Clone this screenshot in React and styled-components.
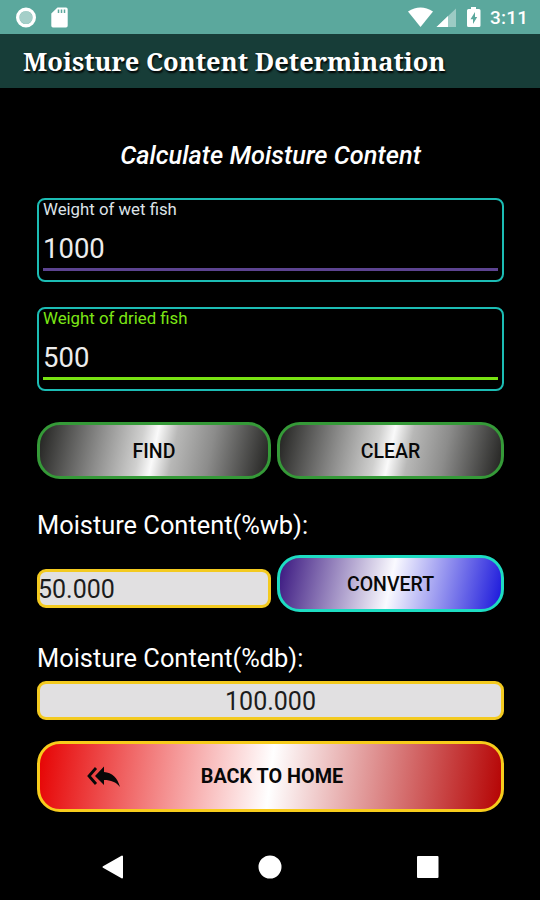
import React, { useState } from 'react';
import styled, { createGlobalStyle } from 'styled-components';

const GlobalStyle = createGlobalStyle`
  * {
    box-sizing: border-box;
  }

  body {
    margin: 0;
    background: #000;
  }
`;

const Screen = styled.div`
  display: flex;
  flex-direction: column;
  width: 540px;
  height: 900px;
  background: #000;
  color: #fff;
  font-family: Roboto, sans-serif;
  overflow: hidden;
`;

const StatusBar = styled.div`
  display: flex;
  justify-content: space-between;
  height: 34px;
  background: #5ba89d;
`;

const Clock = styled.span`
  width: 50px;
  font-size: 19px;
  font-weight: 500;
  line-height: 36px;
  letter-spacing: 0.2px;
`;

const StatusRight = styled.div`
  display: flex;
`;

const AppBar = styled.header`
  display: flex;
  align-items: center;
  height: 54px;
  padding: 0 0 1px 23px;
  background: #173d38;
`;

const AppTitle = styled.h1`
  margin: 0;
  font-family: 'Noto Serif', 'DejaVu Serif Condensed', 'DejaVu Serif', serif;
  font-size: 25.5px;
  font-weight: bold;
  white-space: nowrap;
  text-shadow: 1px 2px 2px #000;
`;

const Content = styled.main`
  flex: 1;
  display: flex;
  flex-direction: column;
  padding: 0 36px 0 37px;
`;

const Heading = styled.h2`
  margin: 51px 0 27px;
  font-size: 25.4px;
  font-weight: 500;
  font-style: italic;
  line-height: 32px;
  text-align: center;
`;

const FieldBox = styled.label`
  display: flex;
  flex-direction: column;
  height: 84px;
  margin-bottom: 25px;
  padding: 0 4px;
  border: 2px solid #1cbcb4;
  border-radius: 8px;
`;

const FieldLabel = styled.span`
  height: 18px;
  font-size: 16.8px;
  line-height: 18px;
  color: ${({ color }) => color};
`;

const FieldInput = styled.input`
  width: 100%;
  height: 53px;
  padding: 11px 0 0;
  border: 0;
  border-bottom: 3px solid ${({ $line }) => $line};
  outline: none;
  background: transparent;
  color: #ececec;
  font-family: inherit;
  font-size: 27.5px;
`;

const Row = styled.div`
  display: grid;
  grid-template-columns: 234px 227px;
  column-gap: 6px;
  align-items: end;
  margin-top: ${({ $top }) => $top}px;
`;

const Button = styled.button`
  height: 57px;
  padding: 2px 0 0;
  border: 3px solid ${({ $border }) => $border};
  border-radius: 23px;
  background: linear-gradient(${({ $angle }) => $angle || 102}deg, ${({ $colors }) => $colors});
  background-origin: border-box;
  color: #080808;
  font-family: inherit;
  font-size: 19.5px;
  font-weight: 500;
`;

const HomeButton = styled(Button)`
  display: grid;
  grid-template-columns: 1fr auto 1fr;
  align-items: center;
  height: 71px;
  margin-top: 21px;
  padding: 0 0 0 3px;
  font-size: 19.8px;
  font-weight: 700;

  svg {
    margin-left: 43px;
  }
`;

const ResultLabel = styled.div`
  height: 32px;
  margin-top: 31px;
  font-size: 25.4px;
  line-height: 31px;
`;

const Result = styled.output`
  display: block;
  height: 39px;
  border: 3px solid #f3ca20;
  border-radius: 9px;
  background: #e1e0e1;
  color: #1c1c1c;
  font-size: 25px;
  line-height: 35px;
`;

const WetResult = styled(Result)`
  margin-bottom: 4px;
  text-indent: -2px;
`;

const DryResult = styled(Result)`
  margin-top: 6px;
  text-align: center;
`;

const NavBar = styled.nav`
  height: 66px;
`;

const silver = '#1c1c1a 0%, #8c8c8b 27%, #d0d0cf 44%, #fafafa 50%, #b8b8b7 58%, #8c8c8b 73%, #1c1c1a 100%';
const violet = '#34107c 0%, #fafaff 50%, #1310da 100%';
const red = '#e60000 0%, #fff 50%, #b40000 100%';

const App = () => {
  const [wet, setWet] = useState('1000');
  const [dried, setDried] = useState('500');
  const [wb, setWb] = useState('50.000');
  const [db, setDb] = useState('100.000');

  const find = () => setWb((((wet - dried) / wet) * 100).toFixed(3));

  const convert = () => setDb(((wb / (100 - wb)) * 100).toFixed(3));

  const clear = () => {
    setWet('');
    setDried('');
    setWb('');
    setDb('');
  };

  return (
    <Screen>
      <GlobalStyle />
      <StatusBar>
        <svg width="80" height="34" fill="#fff">
          <circle cx="26" cy="17.5" r="6.5" opacity="0.45" />
          <circle cx="26" cy="17.5" r="8.3" fill="none" stroke="#fff" strokeWidth="3.4" />
          <path d="M57.5 7.5H66a1.7 1.7 0 0 1 1.7 1.7v16.6a1.7 1.7 0 0 1-1.7 1.7H53a1.7 1.7 0 0 1-1.7-1.7V13.5z" />
          <path d="M58.5 9.5v3.5M61.5 9.5v3.5M64.5 9.5v3.5" stroke="#5ba89d" strokeWidth="1.5" />
        </svg>
        <StatusRight>
          <svg width="90" height="34" fill="#fff">
            <path d="M8 11.5Q20.500 3.500 33 11.500L20.500 27z" />
            <path d="M56 8.500V27H36.500z" opacity="0.4" />
            <path d="M48 16V27H36.500z" />
            <path d="M71 7h5v2h3A1.500 1.500 0 0 1 80.500 10.500v15A1.500 1.500 0 0 1 79 27H68.500A1.500 1.500 0 0 1 67 25.500v-15a1.500 1.500 0 0 1 1.500-1.500H71z" />
            <path d="M75 12l-4.500 7.200h2.500v4.800l4.200-7H75z" fill="#5ba89d" />
          </svg>
          <Clock>3:11</Clock>
        </StatusRight>
      </StatusBar>
      <AppBar>
        <AppTitle>Moisture Content Determination</AppTitle>
      </AppBar>
      <Content>
        <Heading>Calculate Moisture Content</Heading>
        <FieldBox>
          <FieldLabel color="#dde3e8">Weight of wet fish</FieldLabel>
          <FieldInput $line="#5c4390" value={wet} onChange={(e) => setWet(e.target.value)} />
        </FieldBox>
        <FieldBox>
          <FieldLabel color="#7ce615">Weight of dried fish</FieldLabel>
          <FieldInput $line="#78e312" value={dried} onChange={(e) => setDried(e.target.value)} />
        </FieldBox>
        <Row $top={6}>
          <Button $border="#359a38" $colors={silver} onClick={find}>FIND</Button>
          <Button $border="#359a38" $colors={silver} onClick={clear}>CLEAR</Button>
        </Row>
        <ResultLabel>Moisture Content(%wb):</ResultLabel>
        <Row $top={13}>
          <WetResult>{wb}</WetResult>
          <Button $border="#1edcc2" $colors={violet} onClick={convert}>CONVERT</Button>
        </Row>
        <ResultLabel>Moisture Content(%db):</ResultLabel>
        <DryResult>{db}</DryResult>
        <HomeButton $border="#f7cc1c" $angle={97} $colors={red}>
          <svg width="36" height="24" viewBox="0 0 36 24" fill="#080808">
            <path d="M10 3L3 11l7 8" fill="none" stroke="#080808" strokeWidth="2.8" />
            <path d="M18 1.500v5.500c8 .5 13.500 5.500 16 15-4-5-9-7-16-7V20L9 11z" />
          </svg>
          <span>BACK TO HOME</span>
        </HomeButton>
      </Content>
      <NavBar>
        <svg width="540" height="66" fill="#fff" stroke="#fff" strokeWidth="2" strokeLinejoin="round">
          <path d="M122 22.500v21L103.500 33z" />
          <circle cx="270" cy="33" r="10.500" />
          <rect x="418" y="23" width="19.500" height="20" />
        </svg>
      </NavBar>
    </Screen>
  );
};

export default App;
